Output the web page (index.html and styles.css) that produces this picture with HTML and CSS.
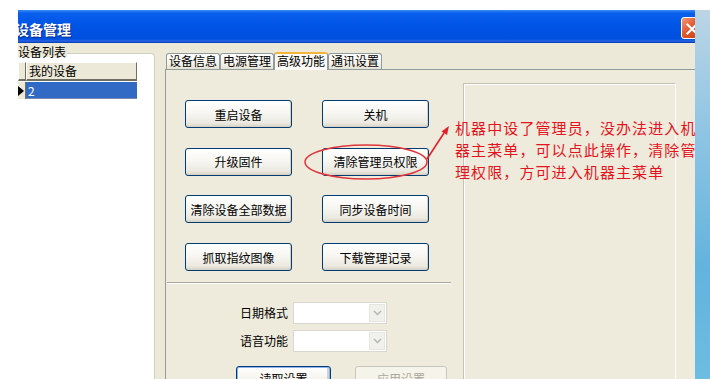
FILE: index.html
```html
<!DOCTYPE html>
<html lang="zh-CN">
<head>
<meta charset="utf-8">
<title>设备管理</title>
<link rel="stylesheet" href="styles.css">
</head>
<body>
<div class="screen">
  <div class="topgap"></div>
  <div class="stage">
    <div class="window">
      <div class="titlebar">
        <span class="title">设备管理</span>
        <span class="close">
          <svg width="22" height="22" viewBox="0 0 22 22"><path d="M6 6 L16 16 M16 6 L6 16" stroke="#fff" stroke-width="2.4" stroke-linecap="square"/></svg>
        </span>
      </div>
      <div class="client">
        <div class="left-pane">
          <div class="group-head"><span class="group-label">设备列表</span><span class="group-line"></span></div>
          <div class="group-body">
            <div class="grid">
              <div class="grid-row head"><div class="cell ind"></div><div class="cell name">我的设备</div></div>
              <div class="grid-row sel"><div class="cell ind"><span class="pointer"></span></div><div class="cell name">2</div></div>
            </div>
          </div>
        </div>
        <div class="tabs">
          <div class="tabstrip">
            <div class="tab">设备信息</div>
            <div class="tab">电源管理</div>
            <div class="tab active">高级功能</div>
            <div class="tab">通讯设置</div>
          </div>
          <div class="tabpage">
            <div class="tp-left">
              <div class="btn-grid">
                <div class="btn">重启设备</div>
                <div class="btn">关机</div>
                <div class="btn">升级固件</div>
                <div class="btn">清除管理员权限</div>
                <div class="btn">清除设备全部数据</div>
                <div class="btn">同步设备时间</div>
                <div class="btn">抓取指纹图像</div>
                <div class="btn">下载管理记录</div>
              </div>
              <div class="sep"></div>
              <div class="form">
                <span class="label">日期格式</span>
                <div class="combo"><span class="arrow"><svg width="9" height="6" viewBox="0 0 9 6"><path d="M1 1 L4.5 4.5 L8 1" fill="none" stroke="#b4b4ae" stroke-width="1.4"/></svg></span></div>
                <span class="label">语音功能</span>
                <div class="combo"><span class="arrow"><svg width="9" height="6" viewBox="0 0 9 6"><path d="M1 1 L4.5 4.5 L8 1" fill="none" stroke="#b4b4ae" stroke-width="1.4"/></svg></span></div>
              </div>
              <div class="actions">
                <div class="btn act default">读取设置</div>
                <div class="btn act disabled">应用设置</div>
              </div>
            </div>
            <div class="tp-right"></div>
          </div>
        </div>
      </div>
    </div>
    <div class="desktop"></div>
  </div>

  <svg class="annot" width="710" height="379" viewBox="0 0 710 379">
    <ellipse cx="366" cy="162" rx="61" ry="17" fill="none" stroke="#e0353a" stroke-width="1.5"/>
    <path d="M427 159 L444 133" stroke="#e0202a" stroke-width="1.6" fill="none"/>
    <path d="M449 126 L441.5 131.5 L447 135 Z" fill="#e0202a"/>
  </svg>
  <div class="note">
    <div class="note-line">机器中设了管理员，没办法进入机</div>
    <div class="note-line">器主菜单，可以点此操作，清除管</div>
    <div class="note-line">理权限，方可进入机器主菜单</div>
  </div>
</div>
</body>
</html>
```
FILE: styles.css
```css
* { box-sizing: border-box; }
html, body { margin: 0; padding: 0; }
body {
  width: 710px;
  height: 379px;
  overflow: hidden;
  background: #fff;
  font-family: "Noto Sans CJK SC", "Noto Sans", sans-serif;
  font-size: 12px;
  color: #000;
}
.screen {
  position: relative;
  width: 710px;
  height: 379px;
  display: flex;
  flex-direction: column;
}
.topgap { height: 10px; flex: none; }
.stage { flex: 1; display: flex; min-height: 0; }
.window {
  width: 695px;
  flex: none;
  display: flex;
  flex-direction: column;
  overflow: hidden;
}
.desktop {
  flex: 1;
  background: linear-gradient(#bcd5e5 0%, #93c6e4 30%, #62b3de 70%, #6dbde2 100%);
}

/* title bar */
.titlebar {
  height: 33px;
  flex: none;
  margin-left: 18px;
  display: flex;
  align-items: center;
  justify-content: space-between;
  overflow: hidden;
  background: linear-gradient(#3b8df5 0px, #0a5fee 3px, #0056e6 40%, #004fe0 88%, #2a66e2 94%, #0036b0 100%);
}
.title {
  color: #fff;
  font-weight: 700;
  font-size: 14px;
  line-height: 16px;
  margin-left: -3px;
  margin-top: 4px;
  text-shadow: 1px 1px 0 #0a2a8a;
}
.close {
  width: 22px;
  height: 22px;
  margin-right: -8px;
  margin-top: 2px;
  flex: none;
  border: 1px solid #fff;
  border-radius: 3px;
  background: linear-gradient(135deg, #f39a78 0%, #e2582e 45%, #c43a12 100%);
  display: flex;
}

/* client */
.client {
  flex: 1;
  display: flex;
  background: #ece9d8;
  min-height: 0;
}
.left-pane {
  width: 155px;
  flex: none;
  display: flex;
  flex-direction: column;
  background: #fff;
}
.group-head {
  height: 14px;
  margin-left: 18px;
  display: flex;
  background: #ece9d8;
}
.group-label {
  line-height: 14px;
  padding-top: 2px;
  white-space: nowrap;
}
.group-line {
  flex: 1;
  margin-top: 10px;
  margin-left: 1px;
  border-top: 1px solid #d0d0bf;
  border-right: 1px solid #d0d0bf;
  border-top-right-radius: 4px;
  background: #fff;
}
.group-body {
  flex: 1;
  border-right: 1px solid #d0d0bf;
  padding: 5px 0 0 18px;
}
.grid { width: 119px; }
.grid-row { display: flex; }
.grid-row.head { height: 19px; }
.grid-row.head .cell {
  background: #ece9d8;
  border-top: 1px solid #fff;
  border-left: 1px solid #fff;
  border-right: 1px solid #716f64;
  border-bottom: 2px solid #716f64;
  line-height: 16px;
  padding-left: 2px;
}
.cell.ind { width: 8px; flex: none; }
.cell.name { flex: 1; }
.grid-row.sel { height: 17px; margin-top: 1px; }
.grid-row.sel .cell.ind {
  background: #ece9d8;
  border-right: 1px solid #716f64;
  display: flex;
  align-items: center;
}
.pointer {
  width: 0;
  height: 0;
  border-top: 5px solid transparent;
  border-bottom: 5px solid transparent;
  border-left: 6px solid #000;
}
.grid-row.sel .cell.name {
  background: #316ac5;
  color: #fff;
  line-height: 17px;
  padding-left: 2px;
  border-bottom: 1px solid #7a86a8;
}

/* tabs */
.tabs {
  flex: 1;
  margin-left: 10px;
  display: flex;
  flex-direction: column;
  padding-top: 9px;
  min-width: 0;
}
.tabstrip {
  height: 17px;
  flex: none;
  display: flex;
  align-items: flex-end;
  padding-left: 1px;
  position: relative;
  z-index: 1;
}
.tab {
  width: 54px;
  height: 16px;
  border: 1px solid #919b9c;
  border-bottom: none;
  border-radius: 3px 3px 0 0;
  background: linear-gradient(#fefefe, #f4f3ee 60%, #e4e1d4);
  text-align: center;
  line-height: 14px;
  white-space: nowrap;
}
.tab.active {
  height: 18px;
  margin-bottom: -1px;
  border-top: 2px solid #f5b53c;
  background: #fbfaf6;
}
.tabpage {
  flex: 1;
  display: flex;
  border-top: 1px solid #919b9c;
  border-left: 1px solid #919b9c;
  background: #eeebdd;
  min-height: 0;
}
.tp-left {
  width: 290px;
  flex: none;
  display: flex;
  flex-direction: column;
  padding-top: 30px;
}
.btn-grid {
  display: grid;
  grid-template-columns: 107px 107px;
  column-gap: 30px;
  row-gap: 19.7px;
  padding-left: 19px;
}
.btn {
  height: 28px;
  border: 1px solid #003c74;
  border-radius: 3px;
  background: linear-gradient(#ffffff 0%, #f7f6f2 45%, #ebe9e0 85%, #d8d3c4 100%);
  display: flex;
  align-items: center;
  justify-content: center;
  white-space: nowrap;
  box-shadow: inset -1px -1px 0 #d6d0c5;
}
.sep {
  margin-top: 11px;
  margin-left: 1px;
  width: 284px;
  height: 2px;
  border-top: 1px solid #aca899;
  border-bottom: 1px solid #fff;
}
.form {
  margin-top: 18px;
  display: grid;
  grid-template-columns: 122px 94px;
  column-gap: 5px;
  row-gap: 6px;
  align-items: center;
}
.label {
  text-align: right;
  line-height: 22px;
  font-size: 12px;
}
.combo {
  height: 22px;
  background: #fff;
  border: 1px solid #d9d8d0;
  display: flex;
  justify-content: flex-end;
  padding: 1px;
}
.arrow {
  width: 16px;
  background: #f0f0ec;
  border: 1px solid #e6e5de;
  display: flex;
  align-items: center;
  justify-content: center;
}
.actions {
  margin-top: 14px;
  display: flex;
  gap: 24px;
  padding-left: 70px;
}
.btn.act { height: 24px; width: 95px; }
.btn.default { box-shadow: inset 0 0 0 1px #8cb4f2, inset -1px -1px 0 2px #d6d0c5; }
.btn.disabled {
  width: 92px;
  border-color: #c9c7ba;
  color: #aca899;
  background: #f5f4ea;
  box-shadow: none;
}
.tp-right {
  width: 213px;
  margin-left: 7px;
  margin-top: 13px;
  border-top: 1px solid #c5c2b2;
  border-left: 1px solid #c5c2b2;
  border-right: 1px solid #fff;
  box-shadow: inset 1px 1px 0 #fff;
}

/* annotation overlay */
.annot {
  position: absolute;
  left: 0;
  top: 0;
  pointer-events: none;
}
.note {
  position: absolute;
  left: 455px;
  top: 117px;
  width: 250px;
  color: #e5141c;
  font-size: 15px;
  letter-spacing: 1.1px;
  display: flex;
  flex-direction: column;
}
.note-line {
  height: 22px;
  line-height: 21px;
  white-space: nowrap;
}
```
